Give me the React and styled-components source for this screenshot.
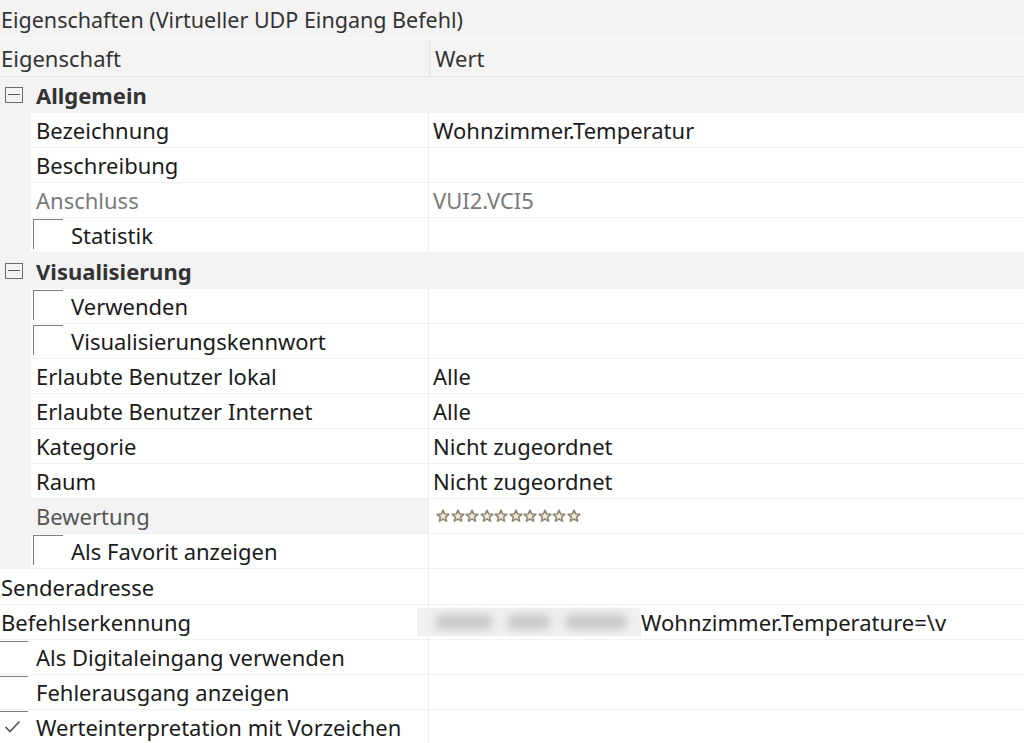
import styled, { createGlobalStyle } from 'styled-components';

const GlobalStyle = createGlobalStyle`
  html, body {
    margin: 0;
    padding: 0;
    background: #f3f3f3;
  }
  body {
    font-family: 'Noto Sans', 'Open Sans', sans-serif;
    color: #1b1b1b;
  }
`;

const rows = [
  { type: 'group', label: 'Allgemein' },
  { label: 'Bezeichnung', value: 'Wohnzimmer.Temperatur', nested: true },
  { label: 'Beschreibung', nested: true },
  { label: 'Anschluss', value: 'VUI2.VCI5', nested: true, disabled: true },
  { label: 'Statistik', nested: true, check: 'empty' },
  { type: 'group', label: 'Visualisierung' },
  { label: 'Verwenden', nested: true, check: 'empty' },
  { label: 'Visualisierungskennwort', nested: true, check: 'empty' },
  { label: 'Erlaubte Benutzer lokal', value: 'Alle', nested: true },
  { label: 'Erlaubte Benutzer Internet', value: 'Alle', nested: true },
  { label: 'Kategorie', value: 'Nicht zugeordnet', nested: true },
  { label: 'Raum', value: 'Nicht zugeordnet', nested: true },
  { label: 'Bewertung', nested: true, rating: true, muted: true },
  { label: 'Als Favorit anzeigen', nested: true, check: 'empty' },
  { label: 'Senderadresse', tall: true },
  { label: 'Befehlserkennung', value: 'Wohnzimmer.Temperature=\\v', blurred: true },
  { label: 'Als Digitaleingang verwenden', check: 'empty' },
  { label: 'Fehlerausgang anzeigen', check: 'empty' },
  { label: 'Werteinterpretation mit Vorzeichen', check: 'checked' },
];

const Page = styled.div`
  width: 1024px;
  height: 743px;
  overflow: hidden;
`;

const Title = styled.div`
  height: 38px;
  padding-left: 1px;
  display: flex;
  align-items: center;
  font-size: 21.5px;
  color: #333;
  background: #f3f3f3;
`;

const Header = styled.div`
  display: grid;
  grid-template-columns: 430px 1fr;
  height: 39px;
  box-sizing: border-box;
  border-top: 1px solid #fbfbfb;
  border-bottom: 1px solid #e6e6e6;
  background: #f4f4f4;
  font-size: 22px;
  color: #333;
`;

const HeaderCell = styled.div`
  display: flex;
  align-items: center;
  padding-left: ${(p) => p.$pad}px;
  border-right: ${(p) => (p.$divider ? '1px solid #e2e2e2' : 'none')};
`;

const Row = styled.div`
  display: grid;
  grid-template-columns: ${(p) => (p.$nested ? '31px 398px 1fr' : '429px 1fr')};
  height: ${(p) => (p.$tall ? 36 : 35)}px;
  box-sizing: border-box;
  font-size: 22px;
`;

const Gutter = styled.div`
  background: #f3f3f3;
`;

const LabelCell = styled.div`
  display: flex;
  align-items: center;
  min-width: 0;
  padding-left: ${(p) => p.$pad}px;
  background: ${(p) => (p.$muted ? '#f3f3f3' : '#fff')};
  color: ${(p) => (p.$gray ? '#7a7a7a' : p.$muted ? '#555' : '#1b1b1b')};
  border-right: 1px solid #eeeeee;
  border-bottom: 1px solid #f1f1f1;
  white-space: nowrap;
`;

const ValueCell = styled.div`
  display: flex;
  align-items: center;
  padding-left: 4px;
  background: #fff;
  color: ${(p) => (p.$gray ? '#7a7a7a' : '#1b1b1b')};
  border-bottom: 1px solid #f1f1f1;
  white-space: nowrap;
`;

const GroupRow = styled.div`
  display: flex;
  align-items: center;
  height: 36px;
  box-sizing: border-box;
  background: #f3f3f3;
  font-size: 22px;
  font-weight: 700;
  color: #333;
`;

const Toggle = styled.span`
  width: 18px;
  height: 16px;
  margin: 0 13px 0 5px;
  border: 1px solid #6d6d6d;
  box-sizing: border-box;
  position: relative;
  &::after {
    content: '';
    position: absolute;
    left: 2px;
    right: 2px;
    top: 6px;
    height: 1px;
    background: #555;
  }
`;

const Box = styled.span`
  align-self: flex-start;
  flex: none;
  display: flex;
  align-items: center;
  justify-content: center;
  margin: 1px 8px 0 0;
  width: ${(p) => (p.$nested ? 30 : 28)}px;
  height: 30px;
  box-sizing: border-box;
  box-shadow: inset 0 1px 0 #7d7d7d ${(p) => (p.$nested ? ', inset 1px 0 0 #7d7d7d' : '')};
`;

const Stars = styled.div`
  display: flex;
  gap: 0.5px;
  padding-left: 3px;
`;

const Blur = styled.span`
  display: inline-flex;
  align-items: center;
  gap: 14px;
  width: 224px;
  height: 28px;
  margin-left: -16px;
  padding-left: 18px;
  box-sizing: border-box;
  background: #f0f0f0;
  span {
    height: 14px;
    background: #c6c6c6;
    border-radius: 7px;
    filter: blur(5px);
  }
`;

const Star = () => (
  <svg width="14" height="14" viewBox="0 0 24 24">
    <path
      d="M12 2l2.9 6.6 7.1.6-5.4 4.7 1.6 7-6.2-3.7-6.2 3.7 1.6-7L2 9.2l7.1-.6z"
      fill="#ebe6d8"
      stroke="#8c846f"
      strokeWidth="2.6"
      strokeLinejoin="round"
    />
  </svg>
);

const PropRow = ({ row }) => {
  const pad = row.check ? (row.nested ? 2 : 0) : row.nested ? 5 : 1;
  return (
    <Row $nested={row.nested} $tall={row.tall}>
      {row.nested && <Gutter />}
      <LabelCell $pad={pad} $muted={row.muted} $gray={row.disabled}>
        {row.check && (
          <Box $nested={row.nested}>
            {row.check === 'checked' && (
              <svg width="17" height="13" viewBox="0 0 17 13" style={{ marginRight: 3 }}>
                <path d="M1.5 7l4.5 4.5 9.5-10" fill="none" stroke="#555" strokeWidth="1.7" />
              </svg>
            )}
          </Box>
        )}
        {row.label}
      </LabelCell>
      <ValueCell $gray={row.disabled}>
        {row.rating && (
          <Stars>
            {Array.from({ length: 10 }).map((_, i) => (
              <Star key={i} />
            ))}
          </Stars>
        )}
        {row.blurred && (
          <Blur>
            <span style={{ width: 58 }} />
            <span style={{ width: 44 }} />
            <span style={{ width: 62 }} />
          </Blur>
        )}
        {row.value}
      </ValueCell>
    </Row>
  );
};

export default function App() {
  return (
    <>
      <GlobalStyle />
      <Page>
        <Title>Eigenschaften (Virtueller UDP Eingang Befehl)</Title>
        <Header>
          <HeaderCell $pad={1} $divider>Eigenschaft</HeaderCell>
          <HeaderCell $pad={5}>Wert</HeaderCell>
        </Header>
        {rows.map((row) =>
          row.type === 'group' ? (
            <GroupRow key={row.label}>
              <Toggle />
              {row.label}
            </GroupRow>
          ) : (
            <PropRow key={row.label} row={row} />
          )
        )}
      </Page>
    </>
  );
}
